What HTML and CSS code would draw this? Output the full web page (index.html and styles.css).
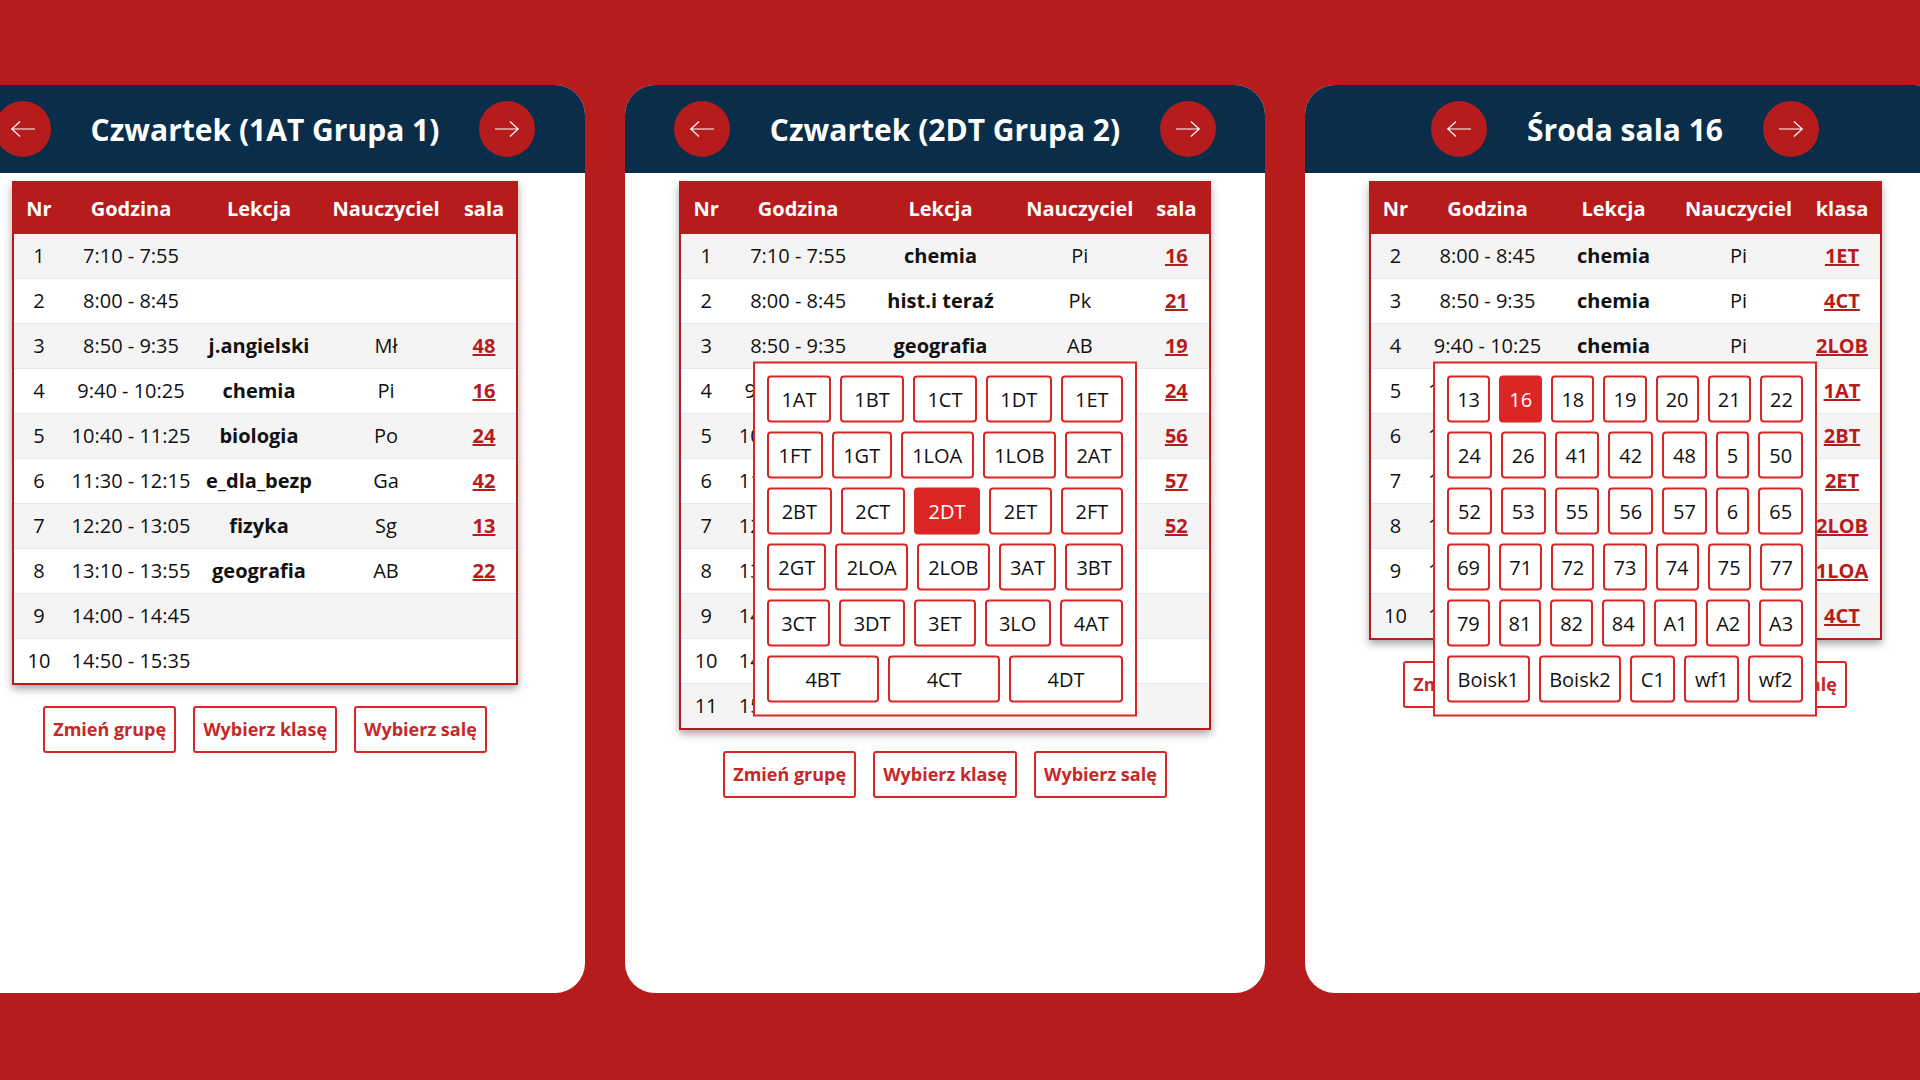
FILE: index.html
```html
<html>

<head>
    <meta charset="utf-8">
    <link rel="stylesheet" href="styles.css">
</head>

<body>
    <div class="slider">
        <!-- panel 1: plan grupy -->
        <section class="panel">
            <div class="panel-head">
                <button class="arrow"><svg viewBox="0 0 24 16" width="24" height="16"><path d="M24 8H0M9 0.5L0.8 8L9 15.5" /></svg></button>
                <h1>Czwartek (1AT Grupa 1)</h1>
                <button class="arrow"><svg viewBox="0 0 24 16" width="24" height="16"><path d="M0 8H24M15 0.5L23.2 8L15 15.5" /></svg></button>
            </div>
            <div class="panel-body">
                <table class="plan">
                    <colgroup>
                        <col class="c-nr"><col class="c-time"><col class="c-lek"><col class="c-teach"><col class="c-room">
                    </colgroup>
                    <thead>
                        <tr><th>Nr</th><th>Godzina</th><th>Lekcja</th><th>Nauczyciel</th><th>sala</th></tr>
                    </thead>
                    <tbody>
                        <tr><td>1</td><td>7:10 - 7:55</td><td class="lek"></td><td></td><td></td></tr>
                        <tr><td>2</td><td>8:00 - 8:45</td><td class="lek"></td><td></td><td></td></tr>
                        <tr><td>3</td><td>8:50 - 9:35</td><td class="lek">j.angielski</td><td>Mł</td><td><a href="#">48</a></td></tr>
                        <tr><td>4</td><td>9:40 - 10:25</td><td class="lek">chemia</td><td>Pi</td><td><a href="#">16</a></td></tr>
                        <tr><td>5</td><td>10:40 - 11:25</td><td class="lek">biologia</td><td>Po</td><td><a href="#">24</a></td></tr>
                        <tr><td>6</td><td>11:30 - 12:15</td><td class="lek">e_dla_bezp</td><td>Ga</td><td><a href="#">42</a></td></tr>
                        <tr><td>7</td><td>12:20 - 13:05</td><td class="lek">fizyka</td><td>Sg</td><td><a href="#">13</a></td></tr>
                        <tr><td>8</td><td>13:10 - 13:55</td><td class="lek">geografia</td><td>AB</td><td><a href="#">22</a></td></tr>
                        <tr><td>9</td><td>14:00 - 14:45</td><td class="lek"></td><td></td><td></td></tr>
                        <tr><td>10</td><td>14:50 - 15:35</td><td class="lek"></td><td></td><td></td></tr>
                    </tbody>
                </table>
                <div class="actions">
                    <button class="action">Zmień grupę</button>
                    <button class="action">Wybierz klasę</button>
                    <button class="action">Wybierz salę</button>
                </div>
            </div>
        </section>

        <!-- panel 2: wybor klasy -->
        <section class="panel">
            <div class="panel-head">
                <button class="arrow"><svg viewBox="0 0 24 16" width="24" height="16"><path d="M24 8H0M9 0.5L0.8 8L9 15.5" /></svg></button>
                <h1>Czwartek (2DT Grupa 2)</h1>
                <button class="arrow"><svg viewBox="0 0 24 16" width="24" height="16"><path d="M0 8H24M15 0.5L23.2 8L15 15.5" /></svg></button>
            </div>
            <div class="panel-body">
                <table class="plan plan-class">
                    <colgroup>
                        <col class="c-nr"><col class="c-time"><col class="c-lek"><col class="c-teach"><col class="c-room">
                    </colgroup>
                    <thead>
                        <tr><th>Nr</th><th>Godzina</th><th>Lekcja</th><th>Nauczyciel</th><th>sala</th></tr>
                    </thead>
                    <tbody>
                        <tr><td>1</td><td>7:10 - 7:55</td><td class="lek">chemia</td><td>Pi</td><td><a href="#">16</a></td></tr>
                        <tr><td>2</td><td>8:00 - 8:45</td><td class="lek">hist.i teraź</td><td>Pk</td><td><a href="#">21</a></td></tr>
                        <tr><td>3</td><td>8:50 - 9:35</td><td class="lek">geografia</td><td>AB</td><td><a href="#">19</a></td></tr>
                        <tr><td>4</td><td>9:40 - 10:25</td><td class="lek">matematyka</td><td>Kw</td><td><a href="#">24</a></td></tr>
                        <tr><td>5</td><td>10:40 - 11:25</td><td class="lek">j.polski</td><td>Dz</td><td><a href="#">56</a></td></tr>
                        <tr><td>6</td><td>11:30 - 12:15</td><td class="lek">informatyka</td><td>Lm</td><td><a href="#">57</a></td></tr>
                        <tr><td>7</td><td>12:20 - 13:05</td><td class="lek">wychowawcza</td><td>Pk</td><td><a href="#">52</a></td></tr>
                        <tr><td>8</td><td>13:10 - 13:55</td><td class="lek"></td><td></td><td></td></tr>
                        <tr><td>9</td><td>14:00 - 14:45</td><td class="lek"></td><td></td><td></td></tr>
                        <tr><td>10</td><td>14:50 - 15:35</td><td class="lek"></td><td></td><td></td></tr>
                        <tr><td>11</td><td>15:40 - 16:25</td><td class="lek"></td><td></td><td></td></tr>
                    </tbody>
                </table>
                <div class="actions">
                    <button class="action">Zmień grupę</button>
                    <button class="action">Wybierz klasę</button>
                    <button class="action">Wybierz salę</button>
                </div>
            </div>
            <div class="picker">
                <button class="pick">1AT</button><button class="pick">1BT</button><button class="pick">1CT</button><button class="pick">1DT</button><button class="pick">1ET</button>
                <button class="pick">1FT</button><button class="pick">1GT</button><button class="pick">1LOA</button><button class="pick">1LOB</button><button class="pick">2AT</button>
                <button class="pick">2BT</button><button class="pick">2CT</button><button class="pick active">2DT</button><button class="pick">2ET</button><button class="pick">2FT</button>
                <button class="pick">2GT</button><button class="pick">2LOA</button><button class="pick">2LOB</button><button class="pick">3AT</button><button class="pick">3BT</button>
                <button class="pick">3CT</button><button class="pick">3DT</button><button class="pick">3ET</button><button class="pick">3LO</button><button class="pick">4AT</button>
                <button class="pick">4BT</button><button class="pick">4CT</button><button class="pick">4DT</button>
            </div>
        </section>

        <!-- panel 3: wybor sali -->
        <section class="panel">
            <div class="panel-head">
                <button class="arrow"><svg viewBox="0 0 24 16" width="24" height="16"><path d="M24 8H0M9 0.5L0.8 8L9 15.5" /></svg></button>
                <h1>Środa sala 16</h1>
                <button class="arrow"><svg viewBox="0 0 24 16" width="24" height="16"><path d="M0 8H24M15 0.5L23.2 8L15 15.5" /></svg></button>
            </div>
            <div class="panel-body">
                <table class="plan plan-room">
                    <colgroup>
                        <col class="c-nr"><col class="c-time"><col class="c-lek"><col class="c-teach"><col class="c-room">
                    </colgroup>
                    <thead>
                        <tr><th>Nr</th><th>Godzina</th><th>Lekcja</th><th>Nauczyciel</th><th>klasa</th></tr>
                    </thead>
                    <tbody>
                        <tr><td>2</td><td>8:00 - 8:45</td><td class="lek">chemia</td><td>Pi</td><td><a href="#">1ET</a></td></tr>
                        <tr><td>3</td><td>8:50 - 9:35</td><td class="lek">chemia</td><td>Pi</td><td><a href="#">4CT</a></td></tr>
                        <tr><td>4</td><td>9:40 - 10:25</td><td class="lek">chemia</td><td>Pi</td><td><a href="#">2LOB</a></td></tr>
                        <tr><td>5</td><td>10:40 - 11:25</td><td class="lek">chemia</td><td>Pi</td><td><a href="#">1AT</a></td></tr>
                        <tr><td>6</td><td>11:30 - 12:15</td><td class="lek">chemia</td><td>Pi</td><td><a href="#">2BT</a></td></tr>
                        <tr><td>7</td><td>12:20 - 13:05</td><td class="lek">chemia</td><td>Pi</td><td><a href="#">2ET</a></td></tr>
                        <tr><td>8</td><td>13:10 - 13:55</td><td class="lek">chemia</td><td>Pi</td><td><a href="#">2LOB</a></td></tr>
                        <tr><td>9</td><td>14:00 - 14:45</td><td class="lek">chemia</td><td>Pi</td><td><a href="#">1LOA</a></td></tr>
                        <tr><td>10</td><td>14:50 - 15:35</td><td class="lek">chemia</td><td>Pi</td><td><a href="#">4CT</a></td></tr>
                    </tbody>
                </table>
                <div class="actions">
                    <button class="action">Zmień grupę</button>
                    <button class="action">Wybierz klasę</button>
                    <button class="action">Wybierz salę</button>
                </div>
            </div>
            <div class="picker">
                <button class="pick">13</button><button class="pick active">16</button><button class="pick">18</button><button class="pick">19</button><button class="pick">20</button><button class="pick">21</button><button class="pick">22</button>
                <button class="pick">24</button><button class="pick">26</button><button class="pick">41</button><button class="pick">42</button><button class="pick">48</button><button class="pick">5</button><button class="pick">50</button>
                <button class="pick">52</button><button class="pick">53</button><button class="pick">55</button><button class="pick">56</button><button class="pick">57</button><button class="pick">6</button><button class="pick">65</button>
                <button class="pick">69</button><button class="pick">71</button><button class="pick">72</button><button class="pick">73</button><button class="pick">74</button><button class="pick">75</button><button class="pick">77</button>
                <button class="pick">79</button><button class="pick">81</button><button class="pick">82</button><button class="pick">84</button><button class="pick">A1</button><button class="pick">A2</button><button class="pick">A3</button>
                <button class="pick">Boisk1</button><button class="pick">Boisk2</button><button class="pick">C1</button><button class="pick">wf1</button><button class="pick">wf2</button>
            </div>
        </section>
    </div>
</body>

</html>
```

FILE: styles.css
```css
html,
body {
    margin: 0;
    overflow: hidden;
}

body {
    background: #b71c1c;
    font-family: "Open Sans", "Noto Sans", sans-serif;
    color: #111;
}

.slider {
    display: flex;
    gap: 40px;
    height: 1080px;
    box-sizing: border-box;
    padding-top: 85px;
    margin-left: -55px;
}

.panel {
    flex: none;
    position: relative;
    width: 640px;
    height: 908px;
    background: #fff;
    border-radius: 30px;
    overflow: hidden;
}

.panel-head {
    display: flex;
    align-items: center;
    justify-content: center;
    gap: 40px;
    height: 88px;
    background: #0a2e4a;
}

.panel-head h1 {
    margin: 0;
    color: #fff;
    font-size: 30px;
    font-weight: 700;
    white-space: nowrap;
}

.arrow {
    display: flex;
    align-items: center;
    justify-content: center;
    flex: none;
    width: 56px;
    height: 56px;
    padding: 0;
    border: none;
    border-radius: 50%;
    background: #b71c1c;
    cursor: pointer;
}

.arrow path {
    fill: none;
    stroke: #fff;
    stroke-width: 1.2;
}

.panel-body {
    padding-top: 8px;
}

/* tabela z planem */
.plan {
    margin: 0 auto;
    border: 2px solid #b71c1c;
    border-spacing: 0;
    box-shadow: 0 4px 8px rgba(0, 0, 0, 0.35);
}

.plan th {
    padding: 13px 4px;
    background: #b71c1c;
    color: #fff;
    font-size: 20px;
    line-height: 25px;
    font-weight: 700;
    text-align: center;
}

.plan td {
    padding: 10px 4px;
    border-bottom: 1px solid #e3e7ee;
    font-size: 20px;
    line-height: 24px;
    text-align: center;
    white-space: nowrap;
}

.plan tbody tr:last-child td {
    border-bottom: none;
}

.plan tbody tr:nth-child(odd) {
    background: #f4f4f4;
}

.plan td.lek {
    font-weight: 700;
}

.plan a {
    color: #b71c1c;
    font-weight: 700;
}

.c-nr { width: 50px; }
.c-time { width: 134px; }
.c-lek { width: 122px; }
.c-teach { width: 132px; }
.c-room { width: 64px; }

.plan-class .c-lek { width: 146px; }
.plan-class .c-teach { width: 128px; }
.plan-class .c-room { width: 65px; }

.plan-room .c-lek { width: 118px; }
.plan-room .c-room { width: 75px; }

.actions {
    display: flex;
    justify-content: center;
    gap: 17px;
    margin-top: 21px;
}

.action {
    padding: 9px 8px;
    border: 2px solid #dc2626;
    border-radius: 3px;
    background: #fff;
    color: #c62828;
    font-family: inherit;
    font-size: 18px;
    line-height: 25px;
    font-weight: 700;
    cursor: pointer;
}

/* okienko wyboru klasy / sali */
.picker {
    position: absolute;
    top: 50%;
    left: 50%;
    transform: translate(-50%, -50%);
    display: flex;
    flex-wrap: wrap;
    gap: 9px;
    width: 384px;
    box-sizing: border-box;
    padding: 12px;
    border: 2px solid #dc2626;
    background: #fff;
}

.pick {
    flex: 1 1 auto;
    padding: 8px 7px;
    border: 2px solid #dc2626;
    border-radius: 4px;
    background: #fff;
    color: #111;
    font-family: inherit;
    font-size: 20px;
    line-height: 27px;
    cursor: pointer;
}

.pick.active {
    background: #dc2626;
    color: #fff;
}
```
